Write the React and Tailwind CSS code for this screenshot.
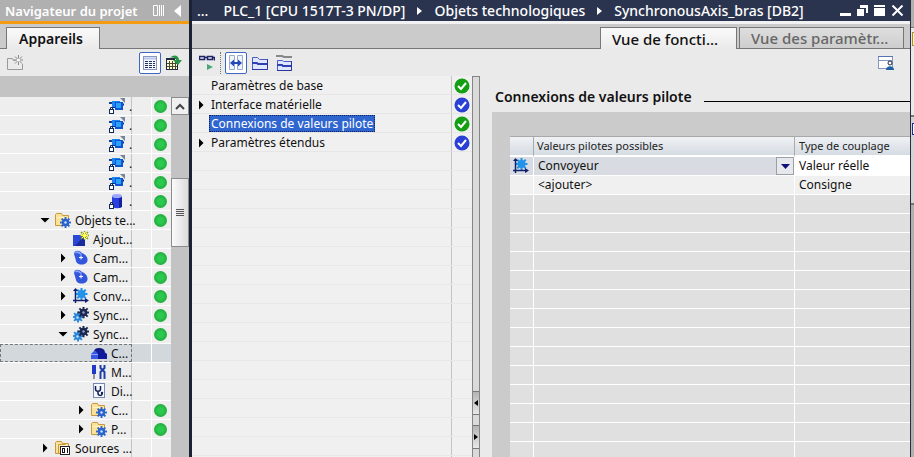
import { useState } from 'react';

function Svg({ children, size = 16 }) {
  return (
    <svg width={size} height={size} viewBox={`0 0 ${size} ${size}`} aria-hidden="true" className="block shrink-0">
      {children}
    </svg>
  );
}

function Gear({ cx, cy, r, fill }) {
  return (
    <g fill={fill}>
      <circle cx={cx} cy={cy} r={r * 0.66} />
      {[0, 45, 90, 135].map((a) => (
        <rect key={a} x={cx - r * 0.17} y={cy - r} width={r * 0.34} height={r * 2} transform={`rotate(${a} ${cx} ${cy})`} />
      ))}
    </g>
  );
}

const Lock = () => (
  <>
    <rect x="0.5" y="11.5" width="4" height="4" fill="#fff" stroke="#10285c" />
    <path d="M1.5 11V9.5h2V11" fill="none" stroke="#10285c" />
  </>
);

const BlockIcon = () => (
  <Svg>
    <path d="M0 5h5" stroke="#0a3f9c" strokeWidth="2" />
    <path d="M3 9h4M12 6.500h3" stroke="#0a2f8c" strokeWidth="2" />
    <rect x="3" y="3" width="8" height="6" fill="#1b86f2" />
    <rect x="6" y="4" width="8" height="8" fill="#0b55d0" />
    <rect x="7" y="5" width="5" height="5" fill="#2da0fa" />
    <path d="M11 0h5v5z" fill="#76839c" />
    <Lock />
  </Svg>
);

const DbIcon = () => (
  <Svg>
    <path d="M3 3v10c0 3 10 3 10 0V3z" fill="#2a3fe0" />
    <path d="M10 4h3v10l-3 1z" fill="#1420a0" />
    <ellipse cx="8" cy="3" rx="5" ry="2" fill="#9aa8ff" />
    <Lock />
  </Svg>
);

const Folder = () => (
  <>
    <path d="M.5 13.5v-11l1-1h5l1 2h6v10z" fill="#fbe29a" stroke="#c8983a" />
    <path d="M1.5 5.5h11" stroke="#fff3c8" />
  </>
);

const FolderGearIcon = () => (
  <Svg>
    <Folder />
    <Gear cx={10.5} cy={10.5} r={5.5} fill="#2a64cc" />
    <circle cx="10.5" cy="10.5" r="1.200" fill="#cfe4ff" />
  </Svg>
);

const FolderSourceIcon = () => (
  <Svg>
    <Folder />
    <path d="M3.500 13V4.500h7" fill="none" stroke="#c8983a" />
    <rect x="5.500" y="6.500" width="9" height="8" fill="#fff" stroke="#222" />
    <rect x="7.500" y="8.500" width="2" height="4" fill="none" stroke="#111" />
    <path d="M12.500 8v5" stroke="#111" />
  </Svg>
);

const AddIcon = () => (
  <Svg>
    <rect x="0" y="4" width="12" height="11" fill="#2a48d8" />
    <path d="M12 4v11H2z" fill="#1a2a9c" />
    <path d="M11.500 0v9M7 4.500h9M8 1l7 7M15 1L8 8" stroke="#8f9b20" strokeWidth="1.500" />
    <path d="M11.500 1v7M8 4.500h7M9 2l5 5M14 2L9 7" stroke="#ffff50" />
  </Svg>
);

const CamIcon = () => (
  <Svg>
    <path d="M2 1.500C4 0 7 1 9 3c3 1 6 4 5.500 7.500S10 15 7 14.500 3 12 2.500 9 0 4 2 1.500z" fill="#3357dc" />
    <path d="M2.500 3c1.500-1.500 4-.5 6 1.500" fill="none" stroke="#8ba6ff" strokeWidth="1.500" />
    <path d="M8 5.500v4M6 7.500h4" stroke="#fff" />
  </Svg>
);

const AxisIcon = () => (
  <Svg>
    <Gear cx={8.5} cy={6} r={6} fill="#2492e8" />
    <path d="M2.500 1v14M0 12.500h14" stroke="#10206c" strokeWidth="1.500" />
    <path d="M0 3l2.500-3L5 3zM12 10l4 2.500-4 2.500z" fill="#10206c" />
  </Svg>
);

const SyncIcon = () => (
  <Svg>
    <Gear cx={5} cy={10} r={5.5} fill="#2a86d8" />
    <Gear cx={10.5} cy={5.5} r={5.8} fill="#1c2850" />
    <circle cx="10.500" cy="5.500" r="1.200" fill="#8fa4d0" />
    <circle cx="4.500" cy="10.500" r="1.200" fill="#bfe0ff" />
  </Svg>
);

const ToolboxIcon = () => (
  <Svg>
    <path d="M4 7c0-4 8-4 9 0" fill="none" stroke="#10187c" strokeWidth="2" />
    <path d="M0 9l4-4 4 4v5H0z" fill="#3858e0" />
    <path d="M4 5h7l5 4v5H7V9z" fill="#10189c" />
    <path d="M0 9.500h7" stroke="#8aa0ff" />
  </Svg>
);

const ToolsIcon = () => (
  <Svg>
    <rect x="1" y="1" width="4" height="9" fill="#2038c8" />
    <path d="M3 10v5" stroke="#777" strokeWidth="1.500" />
    <path d="M9.500 1v3l4 4v7M13.500 1v3l-4 4v7" fill="none" stroke="#1c3fa8" strokeWidth="2" />
  </Svg>
);

const DiagIcon = () => (
  <Svg>
    <rect x="2.500" y=".5" width="11" height="14" fill="#f4f8ff" stroke="#7888b0" />
    <path d="M4.500 3v3c0 3 5 3 5 0V3M7 8v2c0 3 4 3 4 1" fill="none" stroke="#111c50" strokeWidth="1.500" />
    <circle cx="11" cy="10" r="1.200" fill="#111c50" />
  </Svg>
);

const icons = {
  block: BlockIcon,
  db: DbIcon,
  folder: FolderGearIcon,
  source: FolderSourceIcon,
  add: AddIcon,
  cam: CamIcon,
  axis: AxisIcon,
  sync: SyncIcon,
  toolbox: ToolboxIcon,
  tools: ToolsIcon,
  diag: DiagIcon,
};

const indents = ['pl-[40px]', 'pl-[58px]', 'pl-[76px]', 'pl-[94px]'];

const devices = [
  { level: 3, icon: 'block', label: '.', ok: true },
  { level: 3, icon: 'block', label: '.', ok: true },
  { level: 3, icon: 'block', label: '.', ok: true },
  { level: 3, icon: 'block', label: '.', ok: true },
  { level: 3, icon: 'block', label: '.', ok: true },
  { level: 3, icon: 'db', label: '.', ok: true },
  { level: 0, icon: 'folder', label: 'Objets te...', arrow: 'down', ok: true },
  { level: 1, icon: 'add', label: 'Ajout...' },
  { level: 1, icon: 'cam', label: 'Cam...', arrow: 'right', ok: true },
  { level: 1, icon: 'cam', label: 'Cam...', arrow: 'right', ok: true },
  { level: 1, icon: 'axis', label: 'Conv...', arrow: 'right', ok: true },
  { level: 1, icon: 'sync', label: 'Sync...', arrow: 'right', ok: true },
  { level: 1, icon: 'sync', label: 'Sync...', arrow: 'down', ok: true },
  { level: 2, icon: 'toolbox', label: 'C...' },
  { level: 2, icon: 'tools', label: 'M...' },
  { level: 2, icon: 'diag', label: 'Di...' },
  { level: 2, icon: 'folder', label: 'C...', arrow: 'right', ok: true },
  { level: 2, icon: 'folder', label: 'P...', arrow: 'right', ok: true },
  { level: 0, icon: 'source', label: 'Sources ...', arrow: 'right' },
];

const sections = [
  { label: 'Paramètres de base', color: '#12a012' },
  { label: 'Interface matérielle', color: '#2a40d4', arrow: true },
  { label: 'Connexions de valeurs pilote', color: '#12a012' },
  { label: 'Paramètres étendus', color: '#2a40d4', arrow: true },
];

function Arrow({ dir }) {
  return (
    <svg width="10" height="10" viewBox="0 0 10 10" aria-hidden="true" className="block">
      <path d={dir === 'down' ? 'M0.500 3h9L5 7.500z' : 'M3 0.500v9L7.500 5z'} fill="#000" />
    </svg>
  );
}

function DeviceRow({ item, selected, onSelect }) {
  const Icon = icons[item.icon];
  return (
    <li className={`flex h-[19px] shrink-0 border-b border-white ${selected ? 'bg-[#d3d8dd]' : 'bg-[#eeeeee]'}`}>
      <div
        className={`flex min-w-0 flex-1 items-center border-r border-[#c4c4c4] ${indents[item.level]} ${
          selected ? 'outline-1 -outline-offset-1 outline-dashed outline-[#777]' : ''
        }`}
      >
        <span className="w-[15px] shrink-0">
          {item.arrow && (
            <button type="button" aria-label="Développer" className="block">
              <Arrow dir={item.arrow} />
            </button>
          )}
        </span>
        <button type="button" onClick={onSelect} className="flex h-[18px] items-center gap-1 whitespace-nowrap">
          <Icon />
          <span className="self-start leading-5">{item.label}</span>
        </button>
      </div>
      <span className="w-5 border-r border-white" />
      <span className="flex w-[19px] items-center pl-[2px]">
        {item.ok && <span className="size-[13px] rounded-full bg-radial from-[#2bc94d] from-30% to-[#1c9434]" />}
      </span>
    </li>
  );
}

function Navigator() {
  const [selected, setSelected] = useState(13);
  return (
    <aside className="flex w-[189px] shrink-0 flex-col bg-[#c3c3c3]">
      <header className="flex h-[24px] items-center border-b-[3px] border-[#f39c12] bg-[#b0b0b0] pr-2 pl-[5px] text-white">
        <h2 className="flex-1 text-[13px] leading-5 font-semibold">Navigateur du projet</h2>
        <button type="button" aria-label="Colonnes" className="mr-[10px]">
          <svg width="11" height="11" className="block">
            <path d="M.5.5h4v10h-4zM6.500 0v11M8.500 0v11M10.500 0v11" fill="none" stroke="#fff" />
          </svg>
        </button>
        <button type="button" aria-label="Réduire">
          <svg width="7" height="12" className="block">
            <path d="M7 0v12L0 6z" fill="#fff" />
          </svg>
        </button>
      </header>
      <div className="flex h-[25px] items-end border-b border-[#777] bg-[#cbcbcb] pl-[6px]">
        <button type="button" className="-mb-px h-[22px] w-[94px] border border-b-0 border-[#777] bg-linear-to-b from-[#fafafa] to-[#eaeaea] pr-1 text-[14px] leading-5 font-semibold">
          Appareils
        </button>
      </div>
      <div className="flex h-[27px] items-center bg-[#eaeaea] pr-[7px] pl-[7px]">
        <button type="button" aria-label="Nouveau groupe" className="mr-auto">
          <Svg>
            <path d="M.5 14.500v-11h5l1 2h2M15.500 9v5.500H.5" fill="none" stroke="#999" />
            <path d="M11.500 0v10M6.500 5h10M8 1.500l7 7M15 1.500l-7 7" stroke="#888" />
            <circle cx="11.500" cy="5" r="1.500" fill="#fff" />
          </Svg>
        </button>
        <button type="button" aria-label="Détails" className="mr-[5px] flex size-[22px] items-center justify-center rounded-xs border border-[#3f66c4] bg-white">
          <Svg>
            <rect x="1.500" y="1.500" width="13" height="13" fill="#f2f6ff" stroke="#8795c0" />
            <path d="M2 3.500h12" stroke="#b9c7ec" strokeWidth="2" />
            <path d="M3 6.500h10M3 8.500h10M3 10.500h10M3 12.500h10" stroke="#26345c" strokeDasharray="3 1" />
          </Svg>
        </button>
        <button type="button" aria-label="Exporter">
          <Svg>
            <rect x=".5" y="3.500" width="11" height="11" fill="#fffbd0" stroke="#222a44" />
            <path d="M0 4h9" stroke="#222a44" strokeWidth="2" />
            <path d="M3.500 6v8M6.500 6v8M9.500 6v8M1 8.500h10M1 11.500h10" stroke="#4a4a30" />
            <path d="M4 3c3-4 9-3 9 2h3l-4 5-5-5h3c0-2-3-3-6-2z" fill="#259447" />
          </Svg>
        </button>
      </div>
      <div className="h-[21px] bg-[#c3c3c3]" />
      <div className="flex min-h-0 flex-1 overflow-hidden">
        <ul className="min-w-0 flex-1">
          {devices.map((d, i) => (
            <DeviceRow key={i} item={d} selected={selected === i} onSelect={() => setSelected(i)} />
          ))}
        </ul>
        <div className="flex w-[18px] flex-col">
          <button type="button" aria-label="Défiler vers le haut" className="flex h-[18px] items-center justify-center border border-[#8c8c8c] bg-[#f0f0f0]">
            <svg width="10" height="7" className="block">
              <path d="M1 6l4-4 4 4" fill="none" stroke="#444" strokeWidth="2" />
            </svg>
          </button>
          <div className="mt-[63px] flex h-[69px] items-center justify-center border border-[#8c8c8c] bg-linear-to-r from-[#fafafa] to-[#dcdcdc]">
            <svg width="8" height="8" className="block">
              <path d="M0 .5h8M0 2.500h8M0 4.500h8M0 6.500h8" stroke="#555" />
            </svg>
          </div>
        </div>
      </div>
    </aside>
  );
}

function CrumbArrow() {
  return (
    <svg width="5" height="8" aria-hidden="true" className="mx-3 block shrink-0">
      <path d="M0 0v8l5-4z" fill="#fff" />
    </svg>
  );
}

function TitleBar() {
  return (
    <header className="flex h-[24px] shrink-0 items-center border-b-[3px] border-[#f2f2f2] bg-[#2b344f] pr-[6px] pl-[5px] text-[14px] leading-5 font-medium whitespace-nowrap text-white">
      <span className="mr-[15px]">...</span>
      <span>PLC_1 [CPU 1517T-3 PN/DP]</span>
      <CrumbArrow />
      <span>Objets technologiques</span>
      <CrumbArrow />
      <span className="flex-1">SynchronousAxis_bras [DB2]</span>
      <div className="flex gap-[6px]">
        <button type="button" aria-label="Réduire">
          <svg width="11" height="12" className="block"><path d="M0 9.500h11" stroke="#fff" strokeWidth="3" /></svg>
        </button>
        <button type="button" aria-label="Flottant">
          <svg width="11" height="12" className="block"><path d="M3 0h8v8H9V3H3zM0 4h7v7H0z" fill="#fff" /></svg>
        </button>
        <button type="button" aria-label="Agrandir">
          <svg width="11" height="12" className="block"><path d="M0 0h11v2H0zM0 3h11v8H0z" fill="#fff" /></svg>
        </button>
        <button type="button" aria-label="Fermer">
          <svg width="13" height="12" className="block"><path d="M1.500 .5l10 10M11.500 .5l-10 10" stroke="#fff" strokeWidth="2" /></svg>
        </button>
      </div>
    </header>
  );
}

function Toolbar() {
  return (
    <div className="flex h-[27px] shrink-0 items-center bg-[#eaeaea] pr-[16px] pl-[7px]">
      <button type="button" aria-label="Visualiser" className="mr-[5px]">
        <Svg>
          <path d="M.5 1.500h5v3h-5zM8.500 1.500h5v3h-5zM5 2.500h4M13.500 2.500h2v3" fill="none" stroke="#1c2468" strokeWidth="1.500" />
          <path d="M8 9l6 3-6 3z" fill="#49a878" />
        </Svg>
      </button>
      <span className="mr-1 h-[22px] border-l border-dotted border-[#777]" />
      <button type="button" aria-label="Ajuster la largeur" className="mr-[5px] flex size-[22px] items-center justify-center rounded-xs border border-[#3f66c4] bg-white">
        <Svg>
          <path d="M1.500.5h5v14h-5zM9.500.5h5v14h-5z" fill="#f0f4ff" stroke="#9aaccc" />
          <path d="M4 8h8" stroke="#2448b8" strokeWidth="2" />
          <path d="M6 4.500v7L2 8zM10 4.500v7L14 8z" fill="#2448b8" />
        </Svg>
      </button>
      <button type="button" aria-label="Tout ouvrir" className="mr-2">
        <Svg>
          <path d="M.5 14.500v-12h5l2 2h8v10z" fill="#dfe6ff" stroke="#4a5cc8" />
          <path d="M0 8h5l1 1h10" fill="none" stroke="#3040b0" strokeWidth="2" />
          <path d="M15.500 4v10.500H0" fill="none" stroke="#2a36a0" />
        </Svg>
      </button>
      <button type="button" aria-label="Tout fermer">
        <Svg>
          <path d="M0 1h6l2 1h8" fill="none" stroke="#888" strokeWidth="2" />
          <path d="M1.500 15.500v-10h5l1 1h8v9z" fill="#dfe6ff" stroke="#4a5cc8" />
          <path d="M1 10h5l1 1h9" fill="none" stroke="#3040b0" strokeWidth="2" />
          <path d="M15.500 6v9.500H1" fill="none" stroke="#2a36a0" />
        </Svg>
      </button>
      <button type="button" aria-label="Affichage utilisateur" className="ml-auto">
        <Svg>
          <rect x=".5" y="1.500" width="14" height="12" fill="#fff" stroke="#8795bc" />
          <path d="M0 1.500h15" stroke="#5474b4" />
          <path d="M1 5.500h13" stroke="#8795bc" />
          <circle cx="12" cy="8" r="2" fill="#fff" stroke="#1a2444" />
          <path d="M8 15c0-5 8-5 8 0z" fill="#1e5fa8" />
        </Svg>
      </button>
    </div>
  );
}

function Check({ color }) {
  return (
    <svg width="16" height="16" viewBox="0 0 16 16" aria-hidden="true" className="block">
      <circle cx="8" cy="8" r="7.500" fill={color} />
      <path d="M4 8l3 3 5-6" fill="none" stroke="#fff" strokeWidth="2" />
    </svg>
  );
}

function SectionTree() {
  const [current, setCurrent] = useState(2);
  return (
    <nav className="flex w-[280px] shrink-0 flex-col bg-[#f0f0f0]">
      {sections.map((s, i) => (
        <div key={s.label} className="flex h-[19px] shrink-0">
          <div className="flex flex-1 items-center border-r border-b border-r-[#c4c4c4] border-b-[#e6e6e6] pt-px pl-1">
            <span className="w-[13px]">{s.arrow && <Arrow />}</span>
            <button
              type="button"
              onClick={() => setCurrent(i)}
              className={`h-[17px] px-[2px] leading-[18px] whitespace-nowrap ${
                current === i ? 'bg-[#2f65cf] text-white outline-1 -outline-offset-1 outline-dotted outline-[#10205c]' : ''
              }`}
            >
              {s.label}
            </button>
          </div>
          <span className="flex w-5 items-center border-b border-[#e6e6e6] pt-px pl-[2px]">
            <Check color={s.color} />
          </span>
        </div>
      ))}
      {Array.from({ length: 17 }, (_, i) => (
        <div key={i} className="flex h-[19px] shrink-0 border-b border-[#e8e8e8]">
          <span className="flex-1 border-r border-[#c4c4c4]" />
          <span className="w-5" />
        </div>
      ))}
    </nav>
  );
}

function Splitter() {
  return (
    <div className="flex w-2 shrink-0 flex-col border-x border-t border-[#858585] bg-[#dadada] pb-2">
      <button type="button" aria-label="Replier à gauche" className="mt-auto mb-[10px] flex h-6 items-center justify-center border-y border-[#777] bg-linear-to-b from-[#b4b4b4] to-[#e8e8e8]">
        <svg width="4" height="6" className="block"><path d="M4 0v6L0 3z" /></svg>
      </button>
      <button type="button" aria-label="Replier à droite" className="flex h-6 items-center justify-center border-y border-[#777] bg-linear-to-b from-[#b4b4b4] to-[#e8e8e8]">
        <svg width="4" height="6" className="block"><path d="M0 0v6l4-3z" /></svg>
      </button>
    </div>
  );
}

function CouplingTable() {
  return (
    <table className="w-full table-fixed border-separate border-spacing-0 text-left">
      <colgroup>
        <col className="w-6" />
        <col />
        <col className="w-[115px]" />
      </colgroup>
      <thead>
        <tr className="text-[11px] leading-4 text-[#222] *:h-[21px] *:border-t *:border-b-2 *:border-t-[#a8a8a8] *:border-b-white *:bg-linear-to-b *:from-[#f0f2f5] *:to-[#d5dbe2] *:py-0">
          <th aria-label="Type" className="border-r border-r-[#aaa]" />
          <th className="border-r border-r-[#aaa] px-[3px] font-normal">Valeurs pilotes possibles</th>
          <th className="px-[4px] font-normal">Type de couplage</th>
        </tr>
      </thead>
      <tbody className="leading-4 [&_td]:h-[19px] [&_td]:border-b [&_td]:border-white [&_td]:py-0">
        <tr className="bg-[#d8dce2]">
          <td className="border-r pr-0 pl-[3px]"><AxisIcon /></td>
          <td className="border-r px-0">
            <div className="relative">
              <select aria-label="Valeur pilote" className="block h-[18px] w-full appearance-none bg-transparent pl-1 leading-4">
                <option>Convoyeur</option>
              </select>
              <span className="pointer-events-none absolute inset-y-0 right-0 flex w-[18px] items-center justify-center border border-[#9aa0aa] bg-[#e6e8ec]">
                <svg width="9" height="5" className="block"><path d="M0 0h9L4.500 5z" fill="#10107c" /></svg>
              </span>
            </div>
          </td>
          <td className="bg-white pr-0 pl-1">Valeur réelle</td>
        </tr>
        <tr className="bg-[#f0f0f0]">
          <td className="border-r px-0" />
          <td className="border-r pr-0 pl-1">&lt;ajouter&gt;</td>
          <td className="pr-0 pl-1">Consigne</td>
        </tr>
        {Array.from({ length: 15 }, (_, i) => (
          <tr key={i} className="bg-[#e0e0e0]">
            <td className="border-r px-0" />
            <td className="border-r px-0" />
            <td className="px-0" />
          </tr>
        ))}
      </tbody>
    </table>
  );
}

function Editor() {
  return (
    <main className="flex min-w-0 flex-1 flex-col border-r border-l-[3px] border-r-[#2a2f3c] border-l-[#1a2233] bg-[#eaeaea]">
      <TitleBar />
      <div className="flex h-[25px] shrink-0 items-end justify-end gap-[2px] border-b border-[#777] bg-[#cbcbcb] pr-[6px] text-[15px] leading-5 font-medium">
        <button type="button" className="-mb-px h-[22px] w-[137px] border border-b-0 border-[#777] bg-linear-to-b from-[#fafafa] to-[#eaeaea] pl-[11px] text-left">
          Vue de foncti...
        </button>
        <button type="button" className="h-[21px] w-[165px] border border-b-0 border-[#777] bg-linear-to-b from-[#dedede] to-[#cecece] pl-[11px] text-left text-[#666]">
          Vue des paramètr...
        </button>
      </div>
      <Toolbar />
      <div className="flex min-h-0 flex-1 overflow-hidden">
        <SectionTree />
        <Splitter />
        <section className="flex min-w-0 flex-1 flex-col">
          <div className="flex h-9 shrink-0 items-center gap-3 pt-[6px] pl-[15px]">
            <h1 className="text-[14px] leading-5 font-semibold whitespace-nowrap">Connexions de valeurs pilote</h1>
            <span className="mt-[9px] h-px flex-1 bg-black" />
          </div>
          <div className="ml-3 flex-1 bg-[#cbcbcb] pt-6 pl-[18px]">
            <CouplingTable />
          </div>
        </section>
      </div>
    </main>
  );
}

export default function App() {
  return (
    <div className="flex h-screen overflow-hidden bg-[#b4b4b4] font-['Noto_Sans',sans-serif] text-[12px] leading-4 text-[#111]">
      <Navigator />
      <Editor />
      <aside className="flex w-[3px] shrink-0 flex-col bg-[#b0b0b0]">
        <div className="mt-[27px] h-[88px] border-t border-[#777] bg-[#eaeaea]">
          <div className="ml-px mt-1 h-[14px] border border-r-0 border-[#a89030] bg-[#fff6b8]" />
        </div>
        <div className="h-[90px] border-y-2 border-[#777] bg-[#d4d4d8] pt-[6px]">
          <div className="ml-px h-[12px] border border-r-0 border-[#1c2c9c] bg-white" />
        </div>
      </aside>
    </div>
  );
}
